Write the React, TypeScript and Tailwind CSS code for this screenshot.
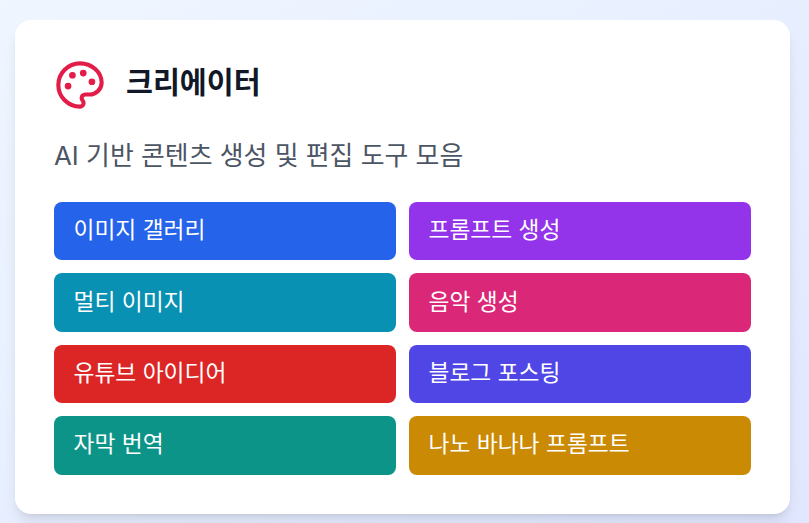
import React from "react";

const tools = [
  { label: "이미지 갤러리", color: "bg-[#2563eb]" },
  { label: "프롬프트 생성", color: "bg-[#9333ea]" },
  { label: "멀티 이미지", color: "bg-[#0891b2]" },
  { label: "음악 생성", color: "bg-[#db2777]" },
  { label: "유튜브 아이디어", color: "bg-[#dc2626]" },
  { label: "블로그 포스팅", color: "bg-[#4f46e5]" },
  { label: "자막 번역", color: "bg-[#0d9488]" },
  { label: "나노 바나나 프롬프트", color: "bg-[#ca8a04]" },
];

const PaletteIcon = () => (
  <svg
    width="52"
    height="52"
    viewBox="0 0 24 24"
    fill="none"
    stroke="currentColor"
    strokeWidth="1.9"
    strokeLinecap="round"
    strokeLinejoin="round"
    className="shrink-0 text-[#e11d48]"
  >
    <circle cx="13.5" cy="6.5" r=".6" fill="currentColor" />
    <circle cx="17.5" cy="10.5" r=".6" fill="currentColor" />
    <circle cx="8.5" cy="7.5" r=".6" fill="currentColor" />
    <circle cx="6.5" cy="12.5" r=".6" fill="currentColor" />
    <path d="M12 2C6.5 2 2 6.5 2 12s4.5 10 10 10c.926 0 1.648-.746 1.648-1.688 0-.437-.18-.835-.437-1.125-.29-.289-.438-.652-.438-1.125a1.64 1.64 0 0 1 1.668-1.668h1.996c3.051 0 5.555-2.503 5.555-5.554C21.965 6.012 17.461 2 12 2z" />
  </svg>
);

const App = () => {
  return (
    <main className="h-[523px] overflow-hidden bg-gradient-to-br from-[#eff6ff] to-[#e0e7ff] pl-[15px] pr-[19px] pt-[20px] font-['Inter','Noto_Sans_CJK_KR',sans-serif]">
      <div className="h-[494px] rounded-2xl bg-white px-[39px] pt-[39px] shadow-lg">
        <div className="flex h-[52px] items-center gap-[20px]">
          <PaletteIcon />
          <h1 className="-translate-y-[2px] text-[29.25px] font-bold text-[#111827]">크리에이터</h1>
        </div>
        <p className="mt-[27px] text-[25.9px] leading-[36px] text-[#4b5563]">
          AI 기반 콘텐츠 생성 및 편집 도구 모음
        </p>
        <div className="mt-[28px] grid grid-cols-2 gap-[13px]">
          {tools.map((tool) => (
            <button
              key={tool.label}
              className={`h-[58.4px] rounded-lg pb-[2px] pl-[19.5px] pr-[20px] text-left text-[22.75px] text-white ${tool.color}`}
            >
              {tool.label}
            </button>
          ))}
        </div>
      </div>
    </main>
  );
};

export default App;
